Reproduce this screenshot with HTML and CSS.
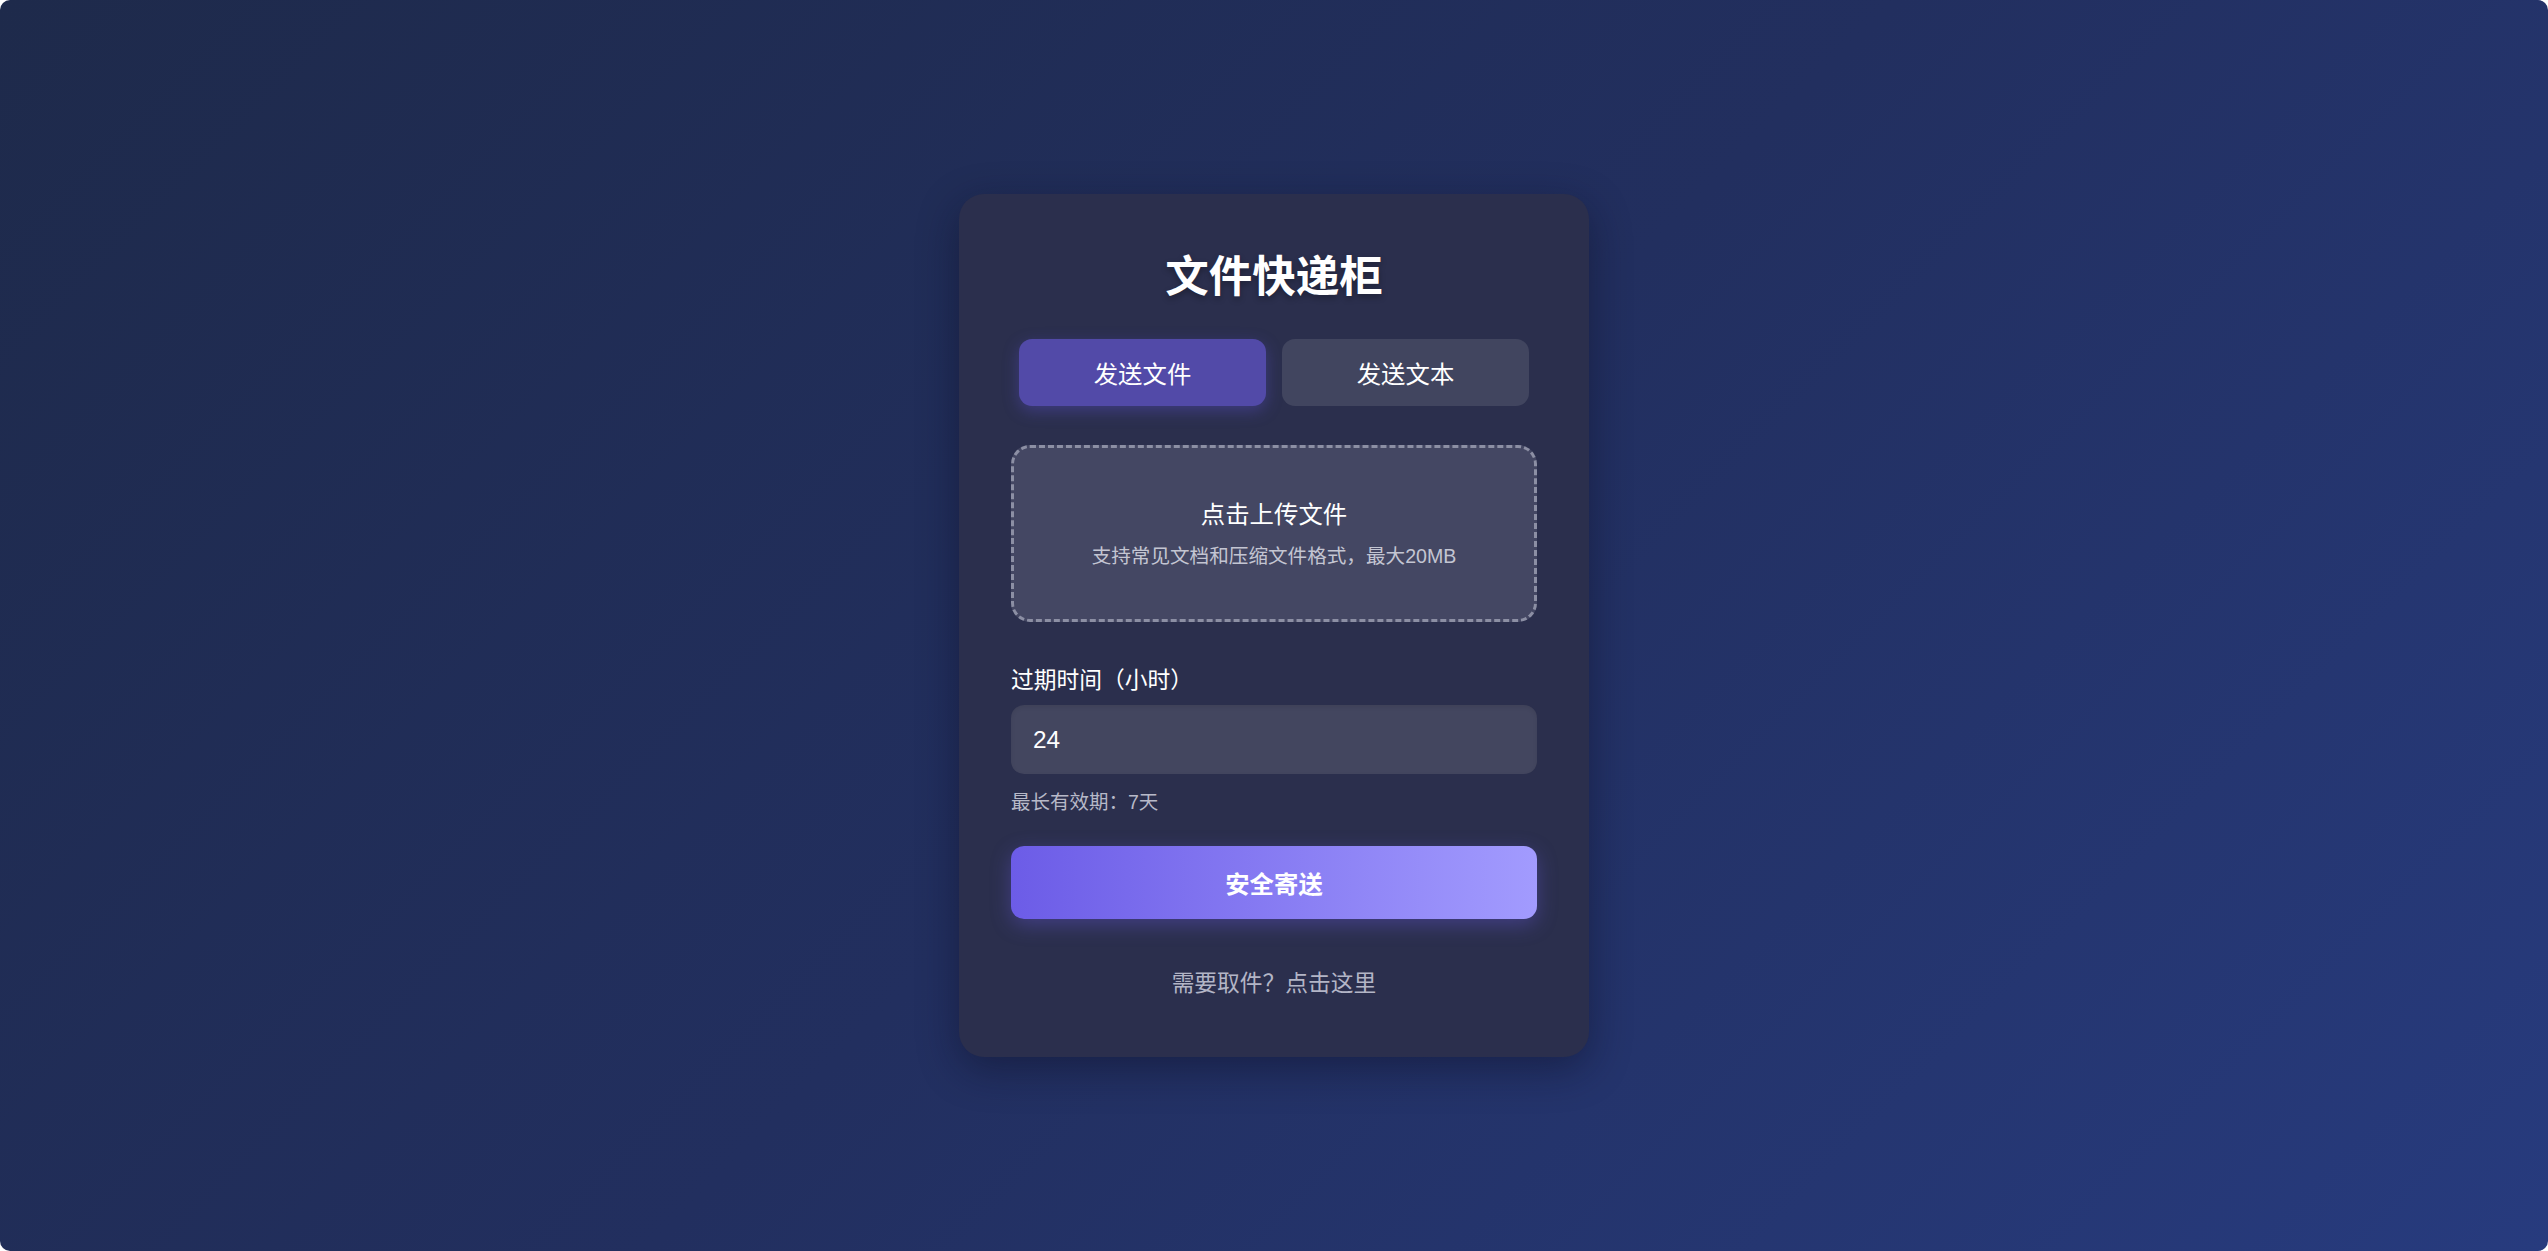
FILE: index.html
```html
<!DOCTYPE html>
<html lang="zh-CN">
<head>
<meta charset="utf-8">
<title>文件快递柜</title>
<link rel="stylesheet" href="styles.css">
</head>
<body>
<main class="card">
  <h1 class="title">文件快递柜</h1>
  <div class="tabs">
    <button class="tab tab-active">发送文件</button>
    <button class="tab">发送文本</button>
  </div>
  <div class="upload">
    <div class="upload-title">点击上传文件</div>
    <div class="upload-sub">支持常见文档和压缩文件格式，最大20MB</div>
  </div>
  <label class="label">过期时间（小时）</label>
  <div class="input">24</div>
  <div class="hint">最长有效期：7天</div>
  <button class="submit">安全寄送</button>
  <div class="link">需要取件？点击这里</div>
</main>
</body>
</html>
```

FILE: styles.css
```css
html {
  background: #ffffff;
  height: 100%;
}
body {
  margin: 0;
  height: 100vh;
  border-radius: 10px;
  background: linear-gradient(135deg, #1e2a4b 0%, #222f5f 50%, #273b7e 100%);
  display: flex;
  align-items: center;
  justify-content: center;
  font-family: "Liberation Sans", "Noto Sans CJK SC", sans-serif;
  color: #ffffff;
}
.card {
  width: 630px;
  box-sizing: border-box;
  padding: 52px 52px 54px;
  background: #2b2f4d;
  border-radius: 25px;
  box-shadow: 0 12px 40px rgba(10, 14, 35, 0.45);
  display: flex;
  flex-direction: column;
}
.title {
  margin: 0 0 31px;
  font-size: 43.5px;
  line-height: 62px;
  height: 62px;
  font-weight: 700;
  text-align: center;
  text-shadow: 0 3px 6px rgba(0, 0, 0, 0.3);
}
.tabs {
  display: flex;
  gap: 16px;
  margin: 0 8px 39px;
}
.tab {
  flex: 1;
  height: 67px;
  border: none;
  border-radius: 13px;
  background: #41455f;
  color: #ffffff;
  font-family: inherit;
  font-size: 24.4px;
  padding: 0;
}
.tab-active {
  background: #524aa8;
  box-shadow: 0 5px 16px rgba(98, 84, 220, 0.35);
}
.upload {
  height: 177px;
  box-sizing: border-box;
  border: 3px dashed #8c8fa4;
  border-radius: 19px;
  background: #444763;
  display: flex;
  flex-direction: column;
  align-items: center;
  padding-top: 48px;
  margin-bottom: 41px;
}
.upload-title {
  font-size: 24.4px;
  line-height: 38px;
  color: #ffffff;
}
.upload-sub {
  margin-top: 4px;
  font-size: 19.6px;
  line-height: 36px;
  color: #c3c5d2;
}
.label {
  display: block;
  font-size: 22.75px;
  line-height: 34px;
  height: 34px;
  margin-bottom: 8px;
  color: #ffffff;
}
.input {
  height: 69px;
  box-sizing: border-box;
  border-radius: 13px;
  background: #43465f;
  padding-left: 22px;
  display: flex;
  align-items: center;
  font-size: 24.4px;
  color: #ffffff;
  box-shadow: inset 0 2px 4px rgba(0, 0, 0, 0.08);
}
.hint {
  margin-top: 13px;
  font-size: 19.5px;
  line-height: 30px;
  height: 30px;
  color: #b7b9c8;
}
.submit {
  margin-top: 29px;
  height: 73px;
  border: none;
  border-radius: 13px;
  background: linear-gradient(90deg, #6c5ce7 0%, #a29bfe 100%);
  color: #ffffff;
  font-family: inherit;
  font-size: 24.4px;
  font-weight: 700;
  padding: 0;
  box-shadow: 0 6px 20px rgba(108, 92, 231, 0.35);
}
.link {
  margin-top: 44px;
  font-size: 22.75px;
  line-height: 40px;
  height: 40px;
  text-align: center;
  color: #b3b5c6;
}
```
